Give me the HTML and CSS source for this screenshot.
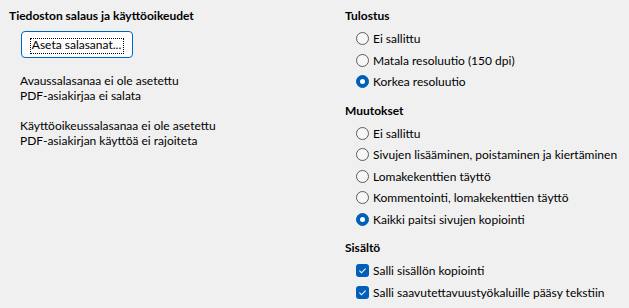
FILE: index.html
```html
<!DOCTYPE html>
<html lang="fi">
<head>
<meta charset="utf-8">
<link rel="stylesheet" href="styles.css">
</head>
<body>
<div class="dialog">
  <section class="col-left">
    <h2 class="heading">Tiedoston salaus ja käyttöoikeudet</h2>
    <button class="btn" type="button"><span class="focus">Aseta salasanat...</span></button>
    <p class="info">Avaussalasanaa ei ole asetettu<br>PDF-asiakirjaa ei salata</p>
    <p class="info">Käyttöoikeussalasanaa ei ole asetettu<br>PDF-asiakirjan käyttöä ei rajoiteta</p>
  </section>
  <section class="col-right">
    <div class="group">
      <h2 class="heading">Tulostus</h2>
      <div class="row"><span class="radio"></span><span>Ei sallittu</span></div>
      <div class="row"><span class="radio"></span><span>Matala resoluutio (150 dpi)</span></div>
      <div class="row"><span class="radio checked"></span><span>Korkea resoluutio</span></div>
    </div>
    <div class="group">
      <h2 class="heading">Muutokset</h2>
      <div class="row"><span class="radio"></span><span>Ei sallittu</span></div>
      <div class="row"><span class="radio"></span><span>Sivujen lisääminen, poistaminen ja kiertäminen</span></div>
      <div class="row"><span class="radio"></span><span>Lomakekenttien täyttö</span></div>
      <div class="row"><span class="radio"></span><span>Kommentointi, lomakekenttien täyttö</span></div>
      <div class="row"><span class="radio checked"></span><span>Kaikki paitsi sivujen kopiointi</span></div>
    </div>
    <div class="group">
      <h2 class="heading">Sisältö</h2>
      <div class="row"><span class="check"><svg viewBox="0 0 13 13" width="13" height="13"><path d="M3.4 6.7 L5.5 8.8 L9.6 4.6" fill="none" stroke="#fff" stroke-width="1.1"/></svg></span><span>Salli sisällön kopiointi</span></div>
      <div class="row"><span class="check"><svg viewBox="0 0 13 13" width="13" height="13"><path d="M3.4 6.7 L5.5 8.8 L9.6 4.6" fill="none" stroke="#fff" stroke-width="1.1"/></svg></span><span>Salli saavutettavuustyökaluille pääsy tekstiin</span></div>
    </div>
  </section>
</div>
</body>
</html>
```
FILE: styles.css
```css
html, body {
  margin: 0;
  padding: 0;
  background: #f0f0f0;
}
body {
  font-family: Lato, "Liberation Sans", sans-serif;
  font-size: 12px;
  color: #000;
  width: 629px;
  height: 308px;
  overflow: hidden;
}
.dialog {
  display: flex;
  padding-top: 8px;
}
.col-left {
  flex: 0 0 345px;
  box-sizing: border-box;
  padding-left: 9px;
  display: flex;
  flex-direction: column;
  align-items: flex-start;
}
.col-right {
  flex: 1;
  display: flex;
  flex-direction: column;
}
.heading {
  margin: 0;
  font-size: 12px;
  font-weight: bold;
  line-height: 16px;
}
.btn {
  margin: 7px 0 0 12px;
  width: 112px;
  height: 27px;
  box-sizing: border-box;
  padding: 7px 0 4px;
  border: 1px solid #0067c0;
  border-radius: 4px;
  background: #fdfdfd;
  font: inherit;
  color: #000;
  display: flex;
  justify-content: center;
  align-items: flex-start;
}
.focus {
  display: block;
  line-height: 12px;
  height: 12px;
  padding: 0 2px 2px 1px;
  outline: 1px dotted #000;
  outline-offset: 0;
}
.info {
  margin: 15px 0 0 11px;
  line-height: 15px;
}
.group + .group {
  margin-top: 10px;
}
.group .heading {
  margin-bottom: 4px;
}
.row {
  display: flex;
  align-items: center;
  gap: 4px;
  height: 21.5px;
  padding-left: 11px;
  white-space: nowrap;
}
.radio {
  flex: 0 0 auto;
  width: 13px;
  height: 13px;
  box-sizing: border-box;
  border: 1px solid #5c5c5c;
  border-radius: 50%;
  background: #f7f7f7;
  display: flex;
  align-items: center;
  justify-content: center;
}
.radio.checked {
  border-color: #005fb8;
  background: #005fb8;
}
.radio.checked::after {
  content: "";
  width: 5px;
  height: 5px;
  border-radius: 50%;
  background: #fff;
}
.check {
  flex: 0 0 auto;
  width: 13px;
  height: 13px;
  border-radius: 3px;
  background: #005fb8;
  display: block;
}
.check svg {
  display: block;
}
```
